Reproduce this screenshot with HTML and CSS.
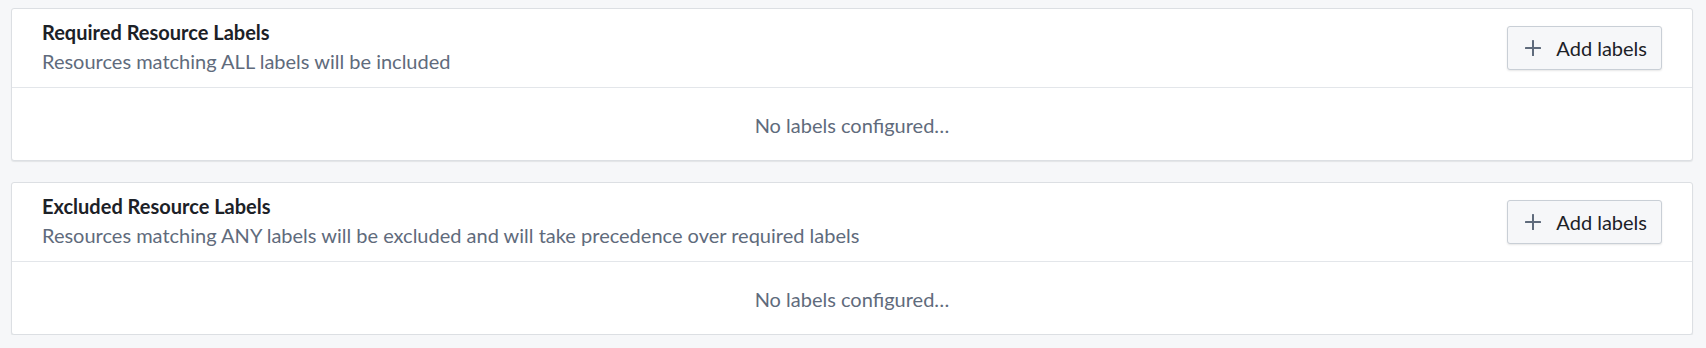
FILE: index.html
```html
<!DOCTYPE html>
<html>
<head>
<meta charset="utf-8">
<link rel="stylesheet" href="styles.css">
</head>
<body>
<main class="page">
  <section class="card">
    <header class="card-header">
      <div class="card-titles">
        <div class="card-title">Required Resource Labels</div>
        <div class="card-subtitle">Resources matching ALL labels will be included</div>
      </div>
      <button class="btn" type="button">
        <svg class="btn-icon" width="16" height="16" viewBox="0 0 16 16" aria-hidden="true"><rect x="7" y="0" width="2" height="16" rx="0.5" fill="currentColor"/><rect x="0" y="7" width="16" height="2" rx="0.5" fill="currentColor"/></svg>
        <span>Add labels</span>
      </button>
    </header>
    <div class="card-body">No labels configured…</div>
  </section>
  <section class="card">
    <header class="card-header">
      <div class="card-titles">
        <div class="card-title">Excluded Resource Labels</div>
        <div class="card-subtitle">Resources matching ANY labels will be excluded and will take precedence over required labels</div>
      </div>
      <button class="btn" type="button">
        <svg class="btn-icon" width="16" height="16" viewBox="0 0 16 16" aria-hidden="true"><rect x="7" y="0" width="2" height="16" rx="0.5" fill="currentColor"/><rect x="0" y="7" width="16" height="2" rx="0.5" fill="currentColor"/></svg>
        <span>Add labels</span>
      </button>
    </header>
    <div class="card-body">No labels configured…</div>
  </section>
</main>
</body>
</html>
```
FILE: styles.css
```css
html, body {
  margin: 0;
  padding: 0;
  background: #f6f7f9;
}
body {
  font-family: "Lato", "Noto Sans", sans-serif;
  font-size: 20px;
  color: #1c2127;
}
.page {
  display: flex;
  flex-direction: column;
  gap: 21px;
  padding: 8px 13px 0 11px;
}
.card {
  background: #ffffff;
  border: 1px solid #dcdfe3;
  border-radius: 3px;
  box-shadow: 0 1px 1px rgba(17, 20, 24, 0.08);
}
.card-header {
  display: flex;
  align-items: center;
  justify-content: space-between;
  height: 79px;
  box-sizing: border-box;
  padding: 10px 30px 12px 30px;
  border-bottom: 1px solid #e3e6ea;
}
.card-titles {
  display: flex;
  flex-direction: column;
}
.card-title {
  font-weight: 700;
  line-height: 27px;
  color: #1c2127;
}
.card-subtitle {
  margin-top: 2px;
  line-height: 27px;
  color: #5f6b7c;
}
.btn {
  display: flex;
  align-items: center;
  gap: 15px;
  height: 44px;
  box-sizing: border-box;
  margin-top: 1px;
  padding: 0 14px 0 17px;
  background: #f6f7f9;
  border: 1px solid #c9cfd6;
  border-radius: 3px;
  box-shadow: 0 1px 2px rgba(17, 20, 24, 0.1);
  font-family: inherit;
  font-size: 20px;
  color: #1c2127;
  cursor: pointer;
}
.btn-icon {
  color: #5f6b7c;
  flex: none;
}
.card-body {
  height: 72px;
  box-sizing: border-box;
  padding-top: 2px;
  display: flex;
  align-items: center;
  justify-content: center;
  line-height: 27px;
  color: #5f6b7c;
}
```
